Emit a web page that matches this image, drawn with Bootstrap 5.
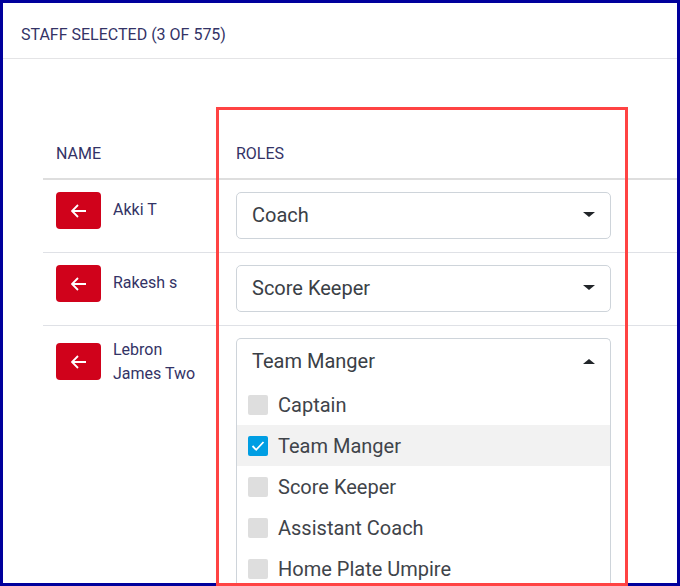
<!DOCTYPE html>
<html lang="en">
<head>
<meta charset="utf-8">
<title>Staff selected</title>
<link rel="stylesheet" href="https://cdn.jsdelivr.net/npm/bootstrap@5.3.0/dist/css/bootstrap.min.css">
<style>
html, body { height: 100%; margin: 0; overflow: hidden; background: #fff; }
body { font-family: Roboto, "Liberation Sans", sans-serif; color: #333366; }
.shot { height: 586px; width: 680px; }
.frame { height: 100%; border: 3px solid #00009c; overflow: hidden; }
.panel-head { height: 56px; border-bottom: 1px solid #e4e4e6; padding: 21px 18px 0; font-size: 16px; line-height: 21px; color: #333366; }
.table-wrap { padding: 70px 0 0 40px; }
.staff-table { table-layout: fixed; width: 634px; margin: 0; --bs-table-color: #333366; }
.staff-table th { font-weight: 400; font-size: 16px; line-height: 21px; padding: 14px 13px 14px; border-bottom: 2px solid #dedede; color: #333366; }
.staff-table td { padding: 12px 13px 13px; border-bottom: 1px solid #dfe1e6; vertical-align: top; }
.staff-table tr:last-child td { border-bottom: 0; }
.name-col { width: 180px; }
.back-btn { width: 45px; height: 37px; padding: 0; border: 0; border-radius: 4px; background: #d0021b; flex: none; }
.staff-tall .back-btn { margin-bottom: 2px; }
.staff-name { font-size: 16px; line-height: 24px; color: #333366; margin-bottom: 1px; }
.role-box { width: 375px; border: 1px solid #ced4da; border-radius: 5px; color: #3a4046; font-size: 20px; background: #fff; }
.role-open { border-bottom: 0; border-radius: 5px 5px 0 0; height: 300px; }
.role-head { height: 47px; padding: 0 15px 2px; }
.role-open .role-head { height: 45px; padding-bottom: 1px; }
.caret-down, .caret-up { width: 0; height: 0; border-left: 6px solid transparent; border-right: 6px solid transparent; }
.caret-down { border-top: 5px solid #212529; }
.caret-up { border-bottom: 5px solid #212529; }
.role-item { height: 41px; padding: 0 11px; gap: 10px; font-size: 20px; color: #3f444a; }
.role-item.is-on { background: #f2f2f2; }
.tick { width: 20px; height: 20px; border-radius: 2px; background: #dedede; flex: none; }
.is-on .tick { background: #009ee3; }
.callout { position: absolute; left: 216px; top: 107px; width: 412px; height: 479px; border: 3px solid #ff4343; pointer-events: none; }
</style>
</head>
<body>
<div class="shot position-relative">
  <div class="frame">
    <div class="panel-head">STAFF SELECTED (3 OF 575)</div>
    <div class="table-wrap">
      <table class="table staff-table">
        <thead>
          <tr><th class="name-col">NAME</th><th>ROLES</th></tr>
        </thead>
        <tbody>
          <tr>
            <td>
              <div class="d-flex align-items-center gap-2">
                <button class="btn back-btn d-flex align-items-center justify-content-center" type="button" aria-label="Remove">
                  <svg width="15" height="14" viewBox="0 0 15 14" fill="none" stroke="#fff" stroke-width="1.8"><path d="M15 7H1.4M7 1 1 7l6 6"/></svg>
                </button>
                <span class="staff-name ms-1">Akki T</span>
              </div>
            </td>
            <td>
              <div class="role-box d-flex align-items-center justify-content-between role-head">
                <span>Coach</span><span class="caret-down"></span>
              </div>
            </td>
          </tr>
          <tr>
            <td>
              <div class="d-flex align-items-center gap-2">
                <button class="btn back-btn d-flex align-items-center justify-content-center" type="button" aria-label="Remove">
                  <svg width="15" height="14" viewBox="0 0 15 14" fill="none" stroke="#fff" stroke-width="1.8"><path d="M15 7H1.4M7 1 1 7l6 6"/></svg>
                </button>
                <span class="staff-name ms-1">Rakesh s</span>
              </div>
            </td>
            <td>
              <div class="role-box d-flex align-items-center justify-content-between role-head">
                <span>Score Keeper</span><span class="caret-down"></span>
              </div>
            </td>
          </tr>
          <tr>
            <td>
              <div class="d-flex align-items-center gap-2 staff-tall">
                <button class="btn back-btn d-flex align-items-center justify-content-center" type="button" aria-label="Remove">
                  <svg width="15" height="14" viewBox="0 0 15 14" fill="none" stroke="#fff" stroke-width="1.8"><path d="M15 7H1.4M7 1 1 7l6 6"/></svg>
                </button>
                <span class="staff-name ms-1">Lebron<br>James Two</span>
              </div>
            </td>
            <td>
              <div class="role-box role-open">
                <div class="d-flex align-items-center justify-content-between role-head">
                  <span>Team Manger</span><span class="caret-up"></span>
                </div>
                <div class="role-item d-flex align-items-center"><span class="tick"></span><span>Captain</span></div>
                <div class="role-item is-on d-flex align-items-center">
                  <span class="tick d-flex align-items-center justify-content-center">
                    <svg width="14" height="12" viewBox="0 0 14 12" fill="none" stroke="#fff" stroke-width="1.8"><path d="M1.5 6 5.2 9.8 12.5 2"/></svg>
                  </span><span>Team Manger</span>
                </div>
                <div class="role-item d-flex align-items-center"><span class="tick"></span><span>Score Keeper</span></div>
                <div class="role-item d-flex align-items-center"><span class="tick"></span><span>Assistant Coach</span></div>
                <div class="role-item d-flex align-items-center"><span class="tick"></span><span>Home Plate Umpire</span></div>
              </div>
            </td>
          </tr>
        </tbody>
      </table>
    </div>
  </div>
  <div class="callout"></div>
</div>
<script src="https://cdn.jsdelivr.net/npm/bootstrap@5.3.0/dist/js/bootstrap.bundle.min.js"></script>
</body>
</html>
